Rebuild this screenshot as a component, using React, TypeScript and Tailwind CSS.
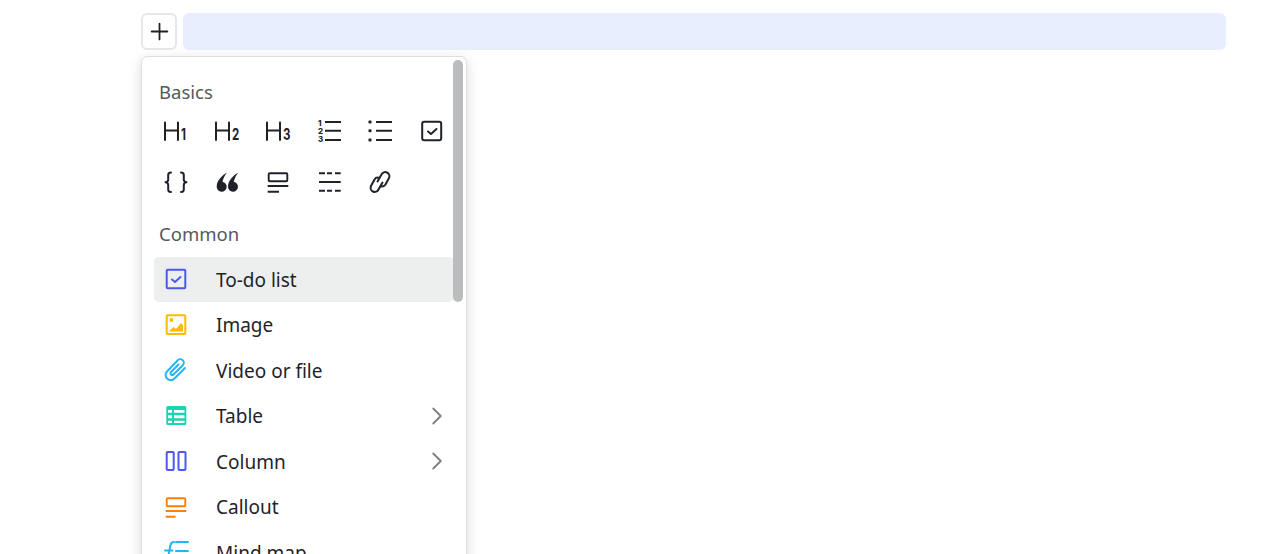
import { ChevronRight, Plus } from "lucide-react";
import type { ReactNode } from "react";

const dark = "#1f2329";
const inter = "Inter, sans-serif";

function Svg({ children }: { children: ReactNode }) {
  return (
    <svg width="24" height="24" viewBox="0 0 24 24" fill="none" strokeLinecap="round" strokeLinejoin="round" className="overflow-visible">
      {children}
    </svg>
  );
}

function Heading({ n }: { n: string }) {
  return (
    <Svg>
      <path d="M1 3.5V21M14 3.5V21M1 11.5H14" stroke={dark} strokeWidth="2" />
      <text transform="translate(17 21) scale(0.72 1)" fontSize="16" fontWeight="700" fill={dark} fontFamily={inter}>
        {n}
      </text>
    </Svg>
  );
}

const basics: ReactNode[] = [
  <Heading n="1" />,
  <Heading n="2" />,
  <Heading n="3" />,
  <Svg>
    <text x="1" y="7" fontSize="8" fontWeight="800" fill={dark} fontFamily={inter}>1</text>
    <text x="1" y="14.5" fontSize="8" fontWeight="800" fill={dark} fontFamily={inter}>2</text>
    <text x="1" y="22.5" fontSize="8" fontWeight="800" fill={dark} fontFamily={inter}>3</text>
    <path d="M8 3H24M8 11.7H24M8 21H24" stroke={dark} strokeWidth="1.9" strokeLinecap="butt" />
  </Svg>,
  <Svg>
    <path d="M8 3H24M8 11.7H24M8 21H24" stroke={dark} strokeWidth="1.9" strokeLinecap="butt" />
    <rect x="0.5" y="1.5" width="3" height="3" rx="0.8" fill={dark} />
    <rect x="0.5" y="10.2" width="3" height="3" rx="0.8" fill={dark} />
    <rect x="0.5" y="19.5" width="3" height="3" rx="0.8" fill={dark} />
  </Svg>,
  <Svg>
    <rect x="3.2" y="2.7" width="19" height="18.6" rx="2" stroke={dark} strokeWidth="2" />
    <path d="M9 12.5L12 15L17.5 10" stroke={dark} strokeWidth="2" />
  </Svg>,
  <Svg>
    <path
      d="M7 2.5C5 2.5 4.2 3.5 4.2 5V9.5C4.2 11 3.2 12 1.5 12.2C3.2 12.4 4.2 13.4 4.2 15V19.5C4.2 21 5 22 7 22M17 2.5C19 2.5 19.8 3.5 19.8 5V9.5C19.8 11 20.8 12 22.5 12.2C20.8 12.4 19.8 13.4 19.8 15V19.5C19.8 21 19 22 17 22"
      stroke={dark}
      strokeWidth="2"
    />
  </Svg>,
  <Svg>
    <path
      d="M12 2.5C7 5.5 1.7 10.5 1.7 16.7A5 5 0 1 0 7.5 11.8C8 8.5 9.8 5.5 12 2.5ZM23.3 2.5C18.3 5.5 13 10.5 13 16.7A5 5 0 1 0 18.8 11.8C19.3 8.5 21.1 5.5 23.3 2.5Z"
      fill={dark}
    />
  </Svg>,
  <Svg>
    <rect x="2.7" y="3.2" width="18.6" height="8" rx="1" stroke={dark} strokeWidth="1.9" />
    <path d="M1.7 16H22.3M1.7 21.7H13" stroke={dark} strokeWidth="1.9" strokeLinecap="butt" />
  </Svg>,
  <Svg>
    <path
      d="M2 3.3H8M10 3.3H15M18 3.3H23.7M2 12H23.7M2 20.7H8M10 20.7H15M18 20.7H23.7"
      stroke={dark}
      strokeWidth="1.9"
      strokeLinecap="butt"
    />
  </Svg>,
  <Svg>
    <path
      d="M9.5 11.5L13.5 4.5A4 4 0 0 1 21 8L17.5 14.5A4 4 0 0 1 12.5 16M14.5 12.5L10.5 19.5A4 4 0 0 1 3 16L6.5 9.5A4 4 0 0 1 11.5 8"
      stroke={dark}
      strokeWidth="2"
    />
  </Svg>,
];

const rows: { label: string; icon: ReactNode; more?: boolean; active?: boolean }[] = [
  {
    label: "To-do list",
    active: true,
    icon: (
      <Svg>
        <rect x="2.7" y="2.7" width="18.6" height="18.6" rx="1" stroke="#4d58ee" strokeWidth="2" />
        <path d="M8 12.5L11 15L16.5 10" stroke="#4d58ee" strokeWidth="2" />
      </Svg>
    ),
  },
  {
    label: "Image",
    icon: (
      <Svg>
        <rect x="2.7" y="2.3" width="18.6" height="18.7" rx="1" stroke="#ffbb00" strokeWidth="2" />
        <rect x="5.7" y="5.3" width="3.4" height="3.4" fill="#ffbb00" />
        <path d="M4.7 18.5L9.5 14L12 16L17 10L19 12V18.5Z" fill="#ffbb00" />
      </Svg>
    ),
  },
  {
    label: "Video or file",
    icon: (
      <Svg>
        <path
          d="M21 10L10.5 20.5A5 5 0 0 1 3 13.5L13.5 2.5A3.4 3.4 0 0 1 19 7L9.5 16.5A1.7 1.7 0 0 1 7 14L14.5 6.5"
          stroke="#1eb7f5"
          strokeWidth="1.9"
        />
      </Svg>
    ),
  },
  {
    label: "Table",
    more: true,
    icon: (
      <Svg>
        <rect x="2.3" y="2" width="20" height="19" rx="1.5" fill="#14d6b0" />
        <path d="M4 6H8V8.7H4ZM10 6H20.5V8.7H10ZM4 11.3H8V14.3H4ZM10 11.3H20.5V14.3H10ZM4 16.7H8V19H4ZM10 16.7H20.5V19H10Z" fill="#fff" />
      </Svg>
    ),
  },
  {
    label: "Column",
    more: true,
    icon: (
      <Svg>
        <rect x="2.7" y="3" width="7" height="18" rx="1" stroke="#4d58ee" strokeWidth="2" />
        <rect x="14.5" y="3" width="7" height="18" rx="1" stroke="#4d58ee" strokeWidth="2" />
      </Svg>
    ),
  },
  {
    label: "Callout",
    icon: (
      <Svg>
        <rect x="2.7" y="3.2" width="18.6" height="8" rx="1" stroke="#ff8000" strokeWidth="1.9" />
        <path d="M1.7 16H22.3M1.7 21.7H11.5" stroke="#ff8000" strokeWidth="1.9" strokeLinecap="butt" />
      </Svg>
    ),
  },
  {
    label: "Mind map",
    icon: (
      <Svg>
        <path d="M10 2C8 2 7 3 6.5 5L3.5 20M1 10.5H8.5M12 2H24M12 11H24M12 20H24" stroke="#1eb7f5" strokeWidth="2" />
      </Svg>
    ),
  },
];

export default function App() {
  return (
    <div className="h-[554px] overflow-hidden bg-white pt-[13px] pl-[141px] pr-[54px] font-['Noto_Sans',sans-serif]">
      <div className="flex gap-[6px]">
        <button className="flex h-[37px] w-[36px] items-center justify-center rounded-[6px] border-2 border-[#e6e7ea] bg-white text-[#1f2329]">
          <Plus size={27} strokeWidth={1.6} />
        </button>
        <div className="h-[37px] flex-1 rounded-[6px] bg-[#e8eefd]" />
      </div>

      <div className="relative mt-[6px] w-[326px] rounded-[6px] border border-[#dcdee2] bg-white px-[12px] pt-[21px] pb-[20px] shadow-[0_4px_14px_rgba(0,0,0,0.14)]">
        <div className="absolute top-[3px] right-[3px] h-[242px] w-[10px] rounded-[5px] bg-[#bbbcbe]" />

        <div className="px-[5px] text-[18.5px] leading-[28px] text-[#55585e]">Basics</div>
        <div className="-mt-[1px] -ml-[3.5px] grid w-[306px] grid-cols-[repeat(6,51px)]">
          {basics.map((icon, i) => (
            <div key={i} className="flex h-[51px] items-center justify-center">
              {icon}
            </div>
          ))}
        </div>

        <div className="mt-[13px] px-[5px] text-[18.5px] leading-[28px] text-[#55585e]">Common</div>
        <div className="mt-[8.5px] w-[300px]">
          {rows.map((r) => (
            <div
              key={r.label}
              className={
                r.active
                  ? "flex h-[45.5px] items-center rounded-[5px] bg-[#edefef] pr-[6px] pl-[10px]"
                  : "flex h-[45.5px] items-center rounded-[5px] pr-[6px] pl-[10px]"
              }
            >
              <span className="flex w-[52px] shrink-0 items-center">{r.icon}</span>
              <span className="flex-1 pt-[1px] text-[19px] text-[#1f2329]">{r.label}</span>
              {r.more && <ChevronRight size={30} strokeWidth={1.5} className="-mr-[4px] text-[#7d8187]" />}
            </div>
          ))}
        </div>
      </div>
    </div>
  );
}
